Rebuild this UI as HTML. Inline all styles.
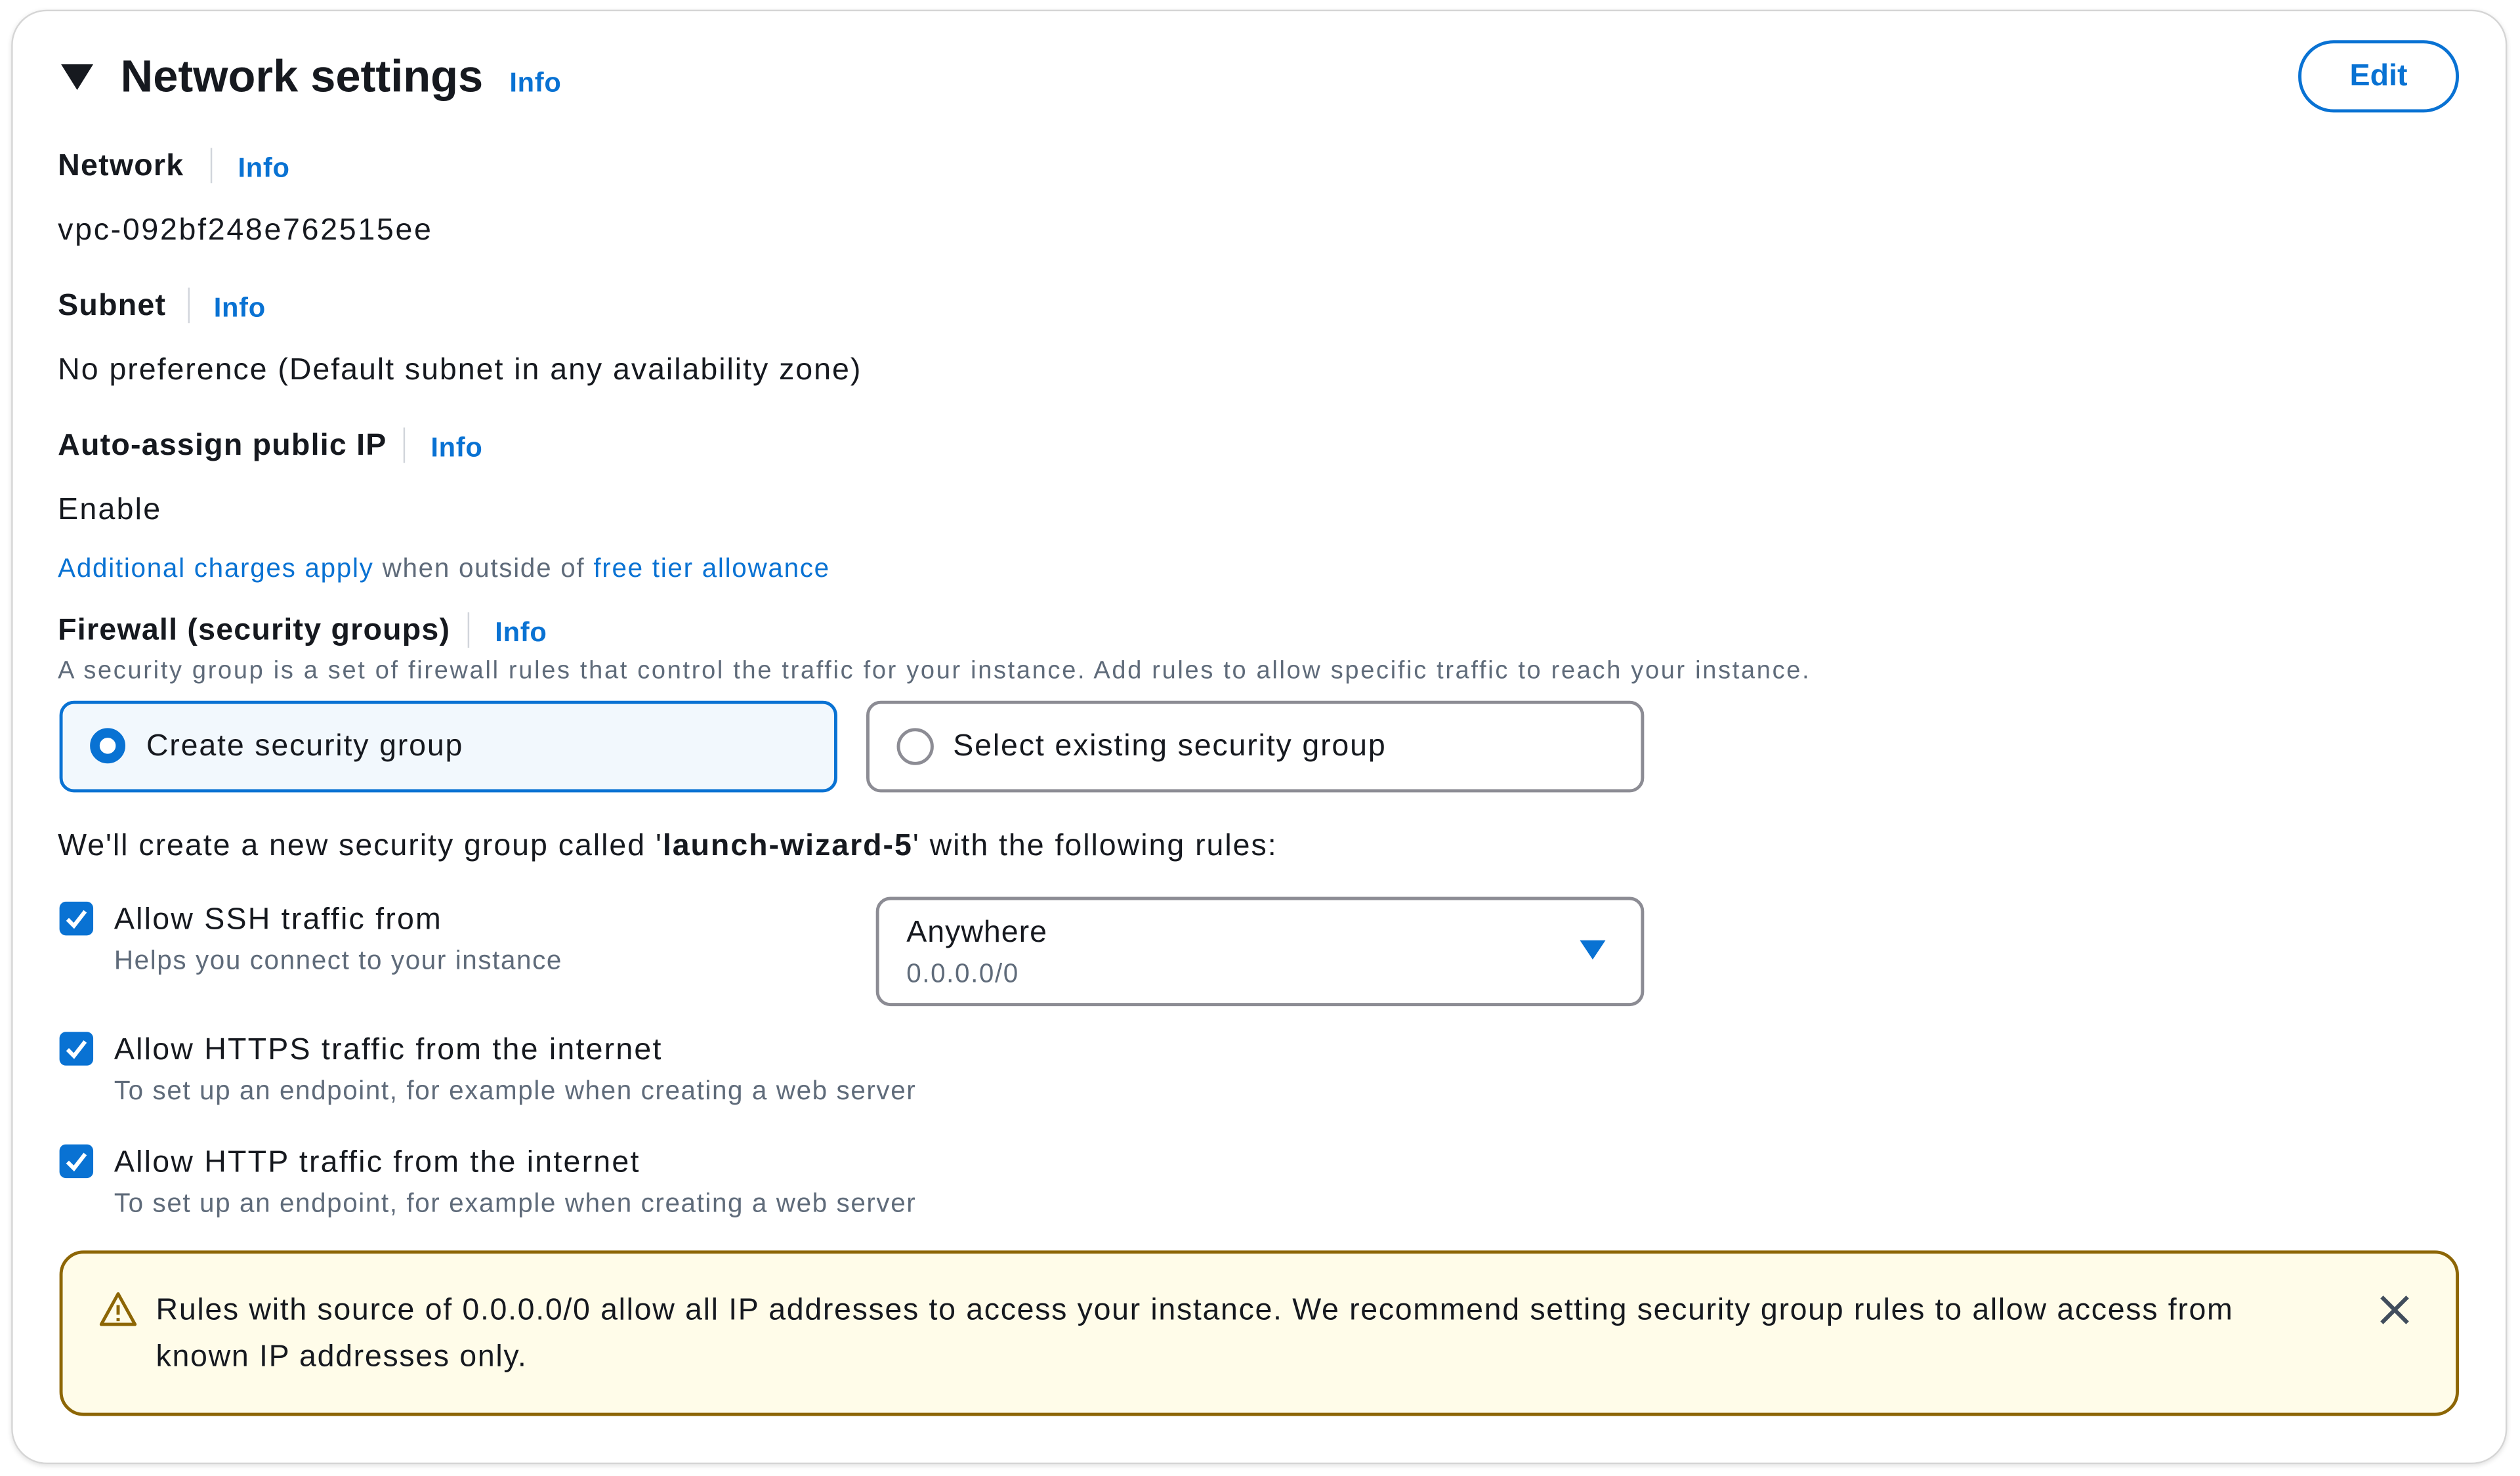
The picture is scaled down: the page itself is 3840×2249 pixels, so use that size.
<!DOCTYPE html>
<html><head><meta charset="utf-8"><style>
html,body{margin:0;padding:0;background:#fff;width:3840px;height:2249px;overflow:hidden}
#s{position:absolute;left:0;top:0;width:1568px;height:918.4px;transform:scale(2.449);transform-origin:0 0;font-family:"Liberation Sans",sans-serif;color:#16191f}
.a{position:absolute;white-space:nowrap;line-height:1;letter-spacing:0.9px}
.b{font-weight:bold;letter-spacing:0.5px}
.i{color:#0972d3;font-weight:bold;font-size:17px;letter-spacing:0.3px}
.l{color:#0972d3}
.g{color:#5f6b7a;letter-spacing:0.65px}
.d{position:absolute;width:1px;height:22px;background:#d1d5db}
.cb{position:absolute;width:21px;height:21px;border-radius:4px;background:#0972d3}
</style></head><body><div id="s">
<div style="position:absolute;left:7px;top:6px;width:1551px;height:903px;border:1.5px solid #d5d5d5;border-radius:22px;box-shadow:0 1px 3px rgba(0,0,0,.12)"></div>
<svg style="position:absolute;left:38px;top:40px" width="20" height="16"><path d="M0 0H20L10 16Z" fill="#16191f"/></svg>
<div class="a b" style="left:75px;top:34px;font-size:28px;letter-spacing:0">Network settings</div>
<div class="a i" style="left:317px;top:43px">Info</div>
<div style="position:absolute;left:1430px;top:25px;width:96px;height:41px;border:2px solid #0972d3;border-radius:22px;color:#0972d3;font-weight:bold;font-size:19px;text-align:center;line-height:41px">Edit</div>

<div class="a b" style="left:36px;top:94px;font-size:19px">Network</div><div class="d" style="left:131px;top:92px"></div><div class="a i" style="left:148px;top:96px">Info</div>
<div class="a" style="left:36px;top:134px;font-size:19px;letter-spacing:1.1px">vpc-092bf248e762515ee</div>
<div class="a b" style="left:36px;top:181px;font-size:19px">Subnet</div><div class="d" style="left:117px;top:179px"></div><div class="a i" style="left:133px;top:183px">Info</div>
<div class="a" style="left:36px;top:221px;font-size:19px;letter-spacing:0.8px">No preference (Default subnet in any availability zone)</div>
<div class="a b" style="left:36px;top:268px;font-size:19px">Auto-assign public IP</div><div class="d" style="left:251px;top:266px"></div><div class="a i" style="left:268px;top:270px">Info</div>
<div class="a" style="left:36px;top:308px;font-size:19px">Enable</div>
<div class="a" style="left:36px;top:346px;font-size:16.5px;letter-spacing:0.7px"><span class="l">Additional charges apply</span> <span class="g" style="letter-spacing:0.7px">when outside of</span> <span class="l">free tier allowance</span></div>
<div class="a b" style="left:36px;top:383px;font-size:19px">Firewall (security groups)</div><div class="d" style="left:291px;top:381px"></div><div class="a i" style="left:308px;top:385px">Info</div>
<div class="a g" style="left:36px;top:410px;font-size:15.5px;letter-spacing:1.1px">A security group is a set of firewall rules that control the traffic for your instance. Add rules to allow specific traffic to reach your instance.</div>

<div style="position:absolute;left:37px;top:436px;width:480px;height:53px;border:2px solid #0972d3;border-radius:9px;background:#f2f8fd"></div>
<div style="position:absolute;left:56px;top:453px;width:10px;height:10px;border:6px solid #0972d3;border-radius:50%;background:#fff"></div>
<div class="a" style="left:91px;top:455px;font-size:19px;letter-spacing:0.75px">Create security group</div>
<div style="position:absolute;left:539px;top:436px;width:480px;height:53px;border:2px solid #8c8c94;border-radius:9px;background:#fff"></div>
<div style="position:absolute;left:558px;top:453px;width:19px;height:19px;border:2px solid #8c8c94;border-radius:50%"></div>
<div class="a" style="left:593px;top:455px;font-size:19px;letter-spacing:0.75px">Select existing security group</div>

<div class="a" style="left:36px;top:517px;font-size:19px;letter-spacing:0.8px">We'll create a new security group called '<b>launch-wizard-5</b>' with the following rules:</div>

<div class="cb" style="left:37px;top:561px"></div><svg style="position:absolute;left:37px;top:561px" width="21" height="21"><path d="M5 11L9 15L16 6" stroke="#fff" stroke-width="2.5" fill="none"/></svg>
<div class="a" style="left:71px;top:563px;font-size:19px">Allow SSH traffic from</div>
<div class="a g" style="left:71px;top:590px;font-size:16.5px">Helps you connect to your instance</div>
<div style="position:absolute;left:545px;top:558px;width:474px;height:64px;border:2px solid #8c8c94;border-radius:9px"></div>
<div class="a" style="left:564px;top:571px;font-size:19px;letter-spacing:0.4px">Anywhere</div>
<div class="a g" style="left:564px;top:598px;font-size:16.5px">0.0.0.0/0</div>
<svg style="position:absolute;left:983px;top:585px" width="16" height="12"><path d="M0 0H16L8 12Z" fill="#0972d3"/></svg>

<div class="cb" style="left:37px;top:642px"></div><svg style="position:absolute;left:37px;top:642px" width="21" height="21"><path d="M5 11L9 15L16 6" stroke="#fff" stroke-width="2.5" fill="none"/></svg>
<div class="a" style="left:71px;top:644px;font-size:19px">Allow HTTPS traffic from the internet</div>
<div class="a g" style="left:71px;top:671px;font-size:16.5px">To set up an endpoint, for example when creating a web server</div>
<div class="cb" style="left:37px;top:712px"></div><svg style="position:absolute;left:37px;top:712px" width="21" height="21"><path d="M5 11L9 15L16 6" stroke="#fff" stroke-width="2.5" fill="none"/></svg>
<div class="a" style="left:71px;top:714px;font-size:19px">Allow HTTP traffic from the internet</div>
<div class="a g" style="left:71px;top:741px;font-size:16.5px">To set up an endpoint, for example when creating a web server</div>

<div style="position:absolute;left:37px;top:778px;width:1489px;height:99px;border:2px solid #8d6605;border-radius:15px;background:#fffce9"></div>
<svg style="position:absolute;left:61px;top:803px" width="25" height="23"><path d="M12.5 2L23 21H2Z" stroke="#8d6605" stroke-width="2" fill="none" stroke-linejoin="round"/><path d="M12.5 9V15M12.5 17V19" stroke="#8d6605" stroke-width="2"/></svg>
<div class="a" style="left:97px;top:801px;font-size:19px;line-height:29px;white-space:normal;width:1310px;letter-spacing:0.68px">Rules with source of 0.0.0.0/0 allow all IP addresses to access your instance. We recommend setting security group rules to allow access from known IP addresses only.</div>
<svg style="position:absolute;left:1480px;top:805px" width="20" height="20"><path d="M2 2L18 18M18 2L2 18" stroke="#414d5c" stroke-width="2.5"/></svg>
</div></body></html>
